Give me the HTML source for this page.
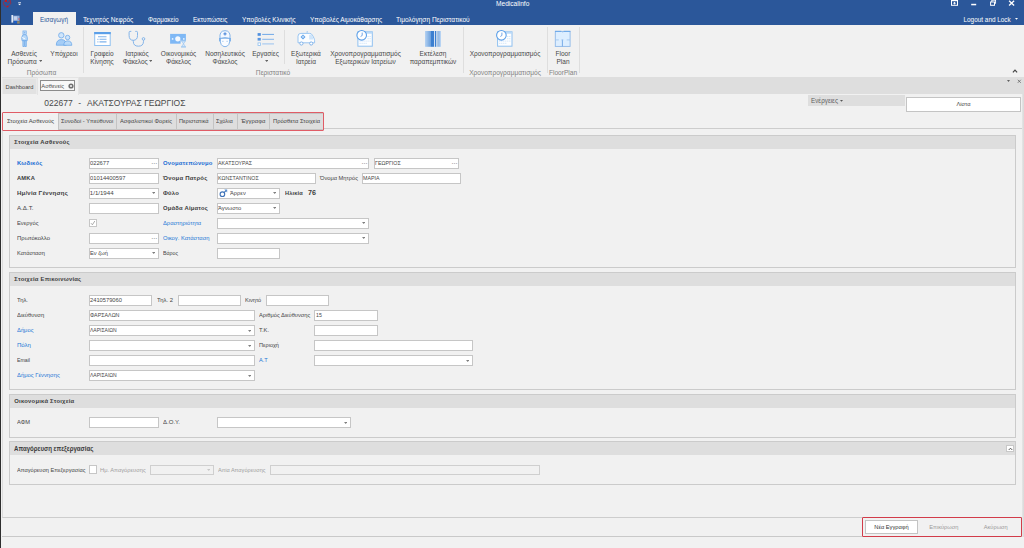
<!DOCTYPE html>
<html><head><meta charset="utf-8"><title>Medicalinfo</title>
<style>
*{box-sizing:border-box;margin:0;padding:0}
html,body{width:1024px;height:548px;overflow:hidden;background:#f1f1f1;font-family:"Liberation Sans",sans-serif;font-size:6px;color:#444}
.a{position:absolute;white-space:nowrap}
#title{left:0;top:0;width:1024px;height:25px;background:#2b579a;border-bottom:0}
#edge{left:0;top:0;width:1px;height:548px;background:#2e2e2e}
.rt{position:absolute;top:14.5px;color:#fff;font-size:6.4px;white-space:nowrap;line-height:10px}
.rl{position:absolute;font-size:6.5px;color:#484848;text-align:center;line-height:7.9px;white-space:nowrap;transform:translateX(-50%)}
.gl{position:absolute;font-size:6.6px;color:#828282;top:68.8px;line-height:8px;white-space:nowrap;transform:translateX(-50%)}
.sep{position:absolute;width:1px;background:#dedede}
.in{position:absolute;background:#fff;border:1px solid #c6c6c6;height:11px;font-size:6.1px;line-height:8.6px;color:#464646;padding-left:0.5px;white-space:nowrap;overflow:hidden}
.in.dis{background:#f1f1f1;border-color:#cfcfcf}
.lb{position:absolute;font-size:6.1px;line-height:10px;color:#444;white-space:nowrap}
.lb.b{font-weight:bold;color:#3c3c3c;font-size:6px;letter-spacing:0.2px}
.lb.l{color:#1f78d6}
.lb.bl{font-weight:bold;color:#1a6cd4;font-size:6px;letter-spacing:0.2px}
.lb.g{color:#9e9e9e}
.grp{position:absolute;left:9px;width:1007px;border:1px solid #cbcbcb;background:#f1f1f1}
.grp .h{position:absolute;left:0;top:0;right:0;height:12.8px;background:#dedede;font-weight:bold;font-size:5.9px;letter-spacing:0.22px;line-height:12.8px;padding-left:4.3px;color:#3c3c3c}
.dd{position:absolute;width:0;height:0;border-left:1.8px solid transparent;border-right:1.8px solid transparent;border-top:2.1px solid #707070}
.el{position:absolute;font-size:5.5px;font-weight:bold;color:#8c8c8c;letter-spacing:0.5px;line-height:9px}
.tab{position:absolute;top:113.5px;height:15.5px;background:#dedede;border:1px solid #c4c4c4;font-size:5.7px;line-height:13.5px;color:#444;text-align:center;white-space:nowrap}
</style></head><body>
<div class="a" id="title"></div>
<div class="a" style="left:496px;top:-1px;color:#fff;font-size:6.6px;line-height:9px">Medicalinfo</div>
<svg class="a" style="left:2px;top:0" width="12" height="9" viewBox="0 0 12 9"><path d="M1.400 2.500 L3.200 0.300 L5.600 2.600 L8.300 0.200 L8.800 3.300 L5.500 7.400 L2 5.200 Z" fill="none" stroke="#c0202a" stroke-width=".7"/><rect x="3.200" y="0" width="1.700" height="2" fill="#d01818"/><circle cx="5.600" cy="6.300" r=".7" fill="#d01818"/></svg>
<svg class="a" style="left:18px;top:2px" width="4" height="4" viewBox="0 0 4 4"><path d="M0.2 0.5h2.800" stroke="#cfd8ea" stroke-width=".8"/><path d="M0 1.700h3.200l-1.600 1.600z" fill="#fff"/></svg>
<svg class="a" style="left:951px;top:0px" width="8" height="6" viewBox="0 0 8 6"><rect x=".5" y=".3" width="6" height="5" fill="none" stroke="#fff" stroke-width="1"/><rect x=".5" y="0" width="6" height="1.2" fill="#fff"/><path d="M3.5 2v2.4M2.2 3.2h2.6" stroke="#fff" stroke-width=".9"/></svg>
<svg class="a" style="left:970px;top:3px" width="8" height="4" viewBox="0 0 8 4"><rect x="1.200" y="0.800" width="5" height="1.500" fill="#fff"/></svg>
<svg class="a" style="left:989.5px;top:0" width="8" height="6" viewBox="0 0 8 6"><rect x="1.8" y=".2" width="3.8" height="3" fill="none" stroke="#fff" stroke-width=".9"/><rect x=".6" y="2" width="3.9" height="3.3" fill="#2b579a" stroke="#fff" stroke-width="1"/></svg>
<svg class="a" style="left:1008px;top:0.2px" width="8" height="6" viewBox="0 0 8 6"><path d="M1.1 0.8l5 4.6M6.1 0.8L1.1 5.4" stroke="#fff" stroke-width="1.3"/></svg>
<div class="a" style="left:963.5px;top:14.5px;color:#fff;font-size:6.4px;line-height:10px">Logout and Lock</div>
<svg class="a" style="left:1015.30px;top:18.40px" width="3" height="1.8" viewBox="0 0 3 1.8"><path d="M0 0h3l-1.5 1.8z" fill="#fff"/></svg>
<div class="a" style="left:33px;top:12px;width:43px;height:13px;background:#f1f1f1"></div>
<svg class="a" style="left:11px;top:15px" width="10" height="9" viewBox="0 0 10 9"><rect x="0.4" y="0" width="1.8" height="7.6" fill="#e2e9f6"/><rect x="2.2" y="0.7" width="6.3" height="5.2" fill="#93add9"/><rect x="2.8" y="1.4" width="3.2" height="3.4" fill="#c5d3ec"/><rect x="7.4" y="3.3" width="1.3" height="1.4" fill="#e05a5a"/><rect x="3.2" y="6.2" width="2.7" height="1.9" fill="#1a5fd0"/><rect x="6.100" y="6.2" width="2.600" height="2.400" fill="#8f8468"/></svg>
<div class="rt" style="left:40px;color:#2b579a;transform:scaleX(0.989);transform-origin:0 50%">Εισαγωγή</div>
<div class="rt" style="left:83px;color:#fff;transform:scaleX(1.025);transform-origin:0 50%">Τεχνητός Νεφρός</div>
<div class="rt" style="left:147.5px;color:#fff;transform:scaleX(0.988);transform-origin:0 50%">Φαρμακείο</div>
<div class="rt" style="left:193px;color:#fff;transform:scaleX(1.011);transform-origin:0 50%">Εκτυπώσεις</div>
<div class="rt" style="left:241.8px;color:#fff;transform:scaleX(1.004);transform-origin:0 50%">Υποβολές Κλινικής</div>
<div class="rt" style="left:309.5px;color:#fff;transform:scaleX(1.016);transform-origin:0 50%">Υποβολές Αιμοκάθαρσης</div>
<div class="rt" style="left:396.2px;color:#fff;transform:scaleX(1.029);transform-origin:0 50%">Τιμολόγηση Περιστατικού</div>
<div class="sep" style="left:83px;top:27px;height:46px"></div>
<div class="sep" style="left:284px;top:30px;height:34px"></div>
<div class="sep" style="left:463px;top:27px;height:46px"></div>
<div class="sep" style="left:546.5px;top:27px;height:46px"></div>
<div class="sep" style="left:578.5px;top:27px;height:46px"></div>
<div class="rl" style="left:24px;top:50.2px">Ασθενείς<br>Πρόσωπα&nbsp;&nbsp;</div>
<div class="rl" style="left:64px;top:50.2px">Υπόχρεοι</div>
<div class="rl" style="left:102px;top:50.2px">Γραφείο<br>Κίνησης</div>
<div class="rl" style="left:137px;top:50.2px">Ιατρικός<br>Φάκελος&nbsp;&nbsp;</div>
<div class="rl" style="left:178.5px;top:50.2px">Οικονομικός<br>Φάκελος</div>
<div class="rl" style="left:225px;top:50.2px">Νοσηλευτικός<br>Φάκελος</div>
<div class="rl" style="left:265.5px;top:50.2px">Εργασίες</div>
<div class="rl" style="left:306px;top:50.2px">Εξωτερικά<br>Ιατρεία</div>
<div class="rl" style="left:365.5px;top:50.2px">Χρονοπρογραμματισμός<br>Εξωτερικών Ιατρείων</div>
<div class="rl" style="left:433px;top:50.2px">Εκτέλεση<br>παραπεμπτικών</div>
<div class="rl" style="left:505px;top:50.2px">Χρονοπρογραμματισμός</div>
<div class="rl" style="left:563px;top:50.2px">Floor<br>Plan</div>
<svg class="a" style="left:38.70px;top:60.25px" width="3.4" height="1.9" viewBox="0 0 3.4 1.9"><path d="M0 0h3.4l-1.7 1.9z" fill="#666"/></svg>
<svg class="a" style="left:148.70px;top:60.25px" width="3.4" height="1.9" viewBox="0 0 3.4 1.9"><path d="M0 0h3.4l-1.7 1.9z" fill="#666"/></svg>
<svg class="a" style="left:264.50px;top:60.30px" width="3.4" height="2" viewBox="0 0 3.4 2"><path d="M0 0h3.4l-1.7 2z" fill="#666"/></svg>
<div class="gl" style="left:41.5px">Πρόσωπα</div>
<div class="gl" style="left:273px">Περιστατικό</div>
<div class="gl" style="left:505px">Χρονοπρογραμματισμός</div>
<div class="gl" style="left:563px">FloorPlan</div>
<svg class="a" style="left:1011.5px;top:69px" width="6" height="4" viewBox="0 0 6 4"><path d="M0.9 3.3L3 1.2l2.1 2.1" stroke="#444" stroke-width="1.2" fill="none"/></svg>
<svg class="a" style="left:0;top:0" width="600" height="52" viewBox="0 0 600 52">
<!-- 1 patient -->
<g fill="#b9d9f8" stroke="#6eaaea" stroke-width=".8">
<rect x="23" y="31" width="3.2" height="3.2" fill="#eaf4ff"/>
<path d="M22.6 35.2q2-1 4 0q1.2 2.5 0.6 5.5h-5.2q-.8-3 .6-5.500z"/>
<path d="M22.9 40.700h1.400v5.800h-1.400zM24.900 40.700h1.400v5.800h-1.400z"/>
</g>
<path d="M24.600 31.600v2M23.600 32.600h2" stroke="#6eaaea" stroke-width=".6"/>
<path d="M22.300 37.500l2.600 1.300" stroke="#fff" stroke-width="1"/>
<!-- 2 people -->
<g fill="#a5cdf6" stroke="#6eaaea" stroke-width=".8">
<circle cx="61.300" cy="35.300" r="2.700" fill="#cfe5fb"/>
<path d="M56.300 45.200q0-5.600 5-5.600t5 5.600z"/>
<circle cx="67.600" cy="37.500" r="2.200" fill="#cfe5fb"/>
<path d="M63.800 45.300q0-4.400 4-4.400t4 4.400z" fill="#b9d9f8"/>
</g>
<!-- 3 form -->
<rect x="94.700" y="32.500" width="15.500" height="13" fill="#fff" stroke="#8fc0f0" stroke-width="1"/>
<rect x="94.200" y="32" width="16.500" height="2.200" fill="#5b9fe8"/>
<path d="M98 36.700h8.500M99.500 39.300h7M99.500 41.900h7" stroke="#7fb2ea" stroke-width="1.100"/>
<path d="M97.300 39.300h1.200M97.300 41.900h1.200" stroke="#7fb2ea" stroke-width="1"/>
<!-- 4 stethoscope -->
<g fill="none" stroke="#78aee8" stroke-width=".9">
<path d="M131.300 31.400h-1.300q-.9 0-.9 1v3.200q0 4.600 4.200 4.700q4.200-.1 4.200-4.700v-3.200q0-1-.9-1h-1.300"/>
<path d="M133.300 40.300v1q0 4.900 5.100 4.900t5.100-4.900v-1"/>
<circle cx="143.500" cy="38.900" r="1.300"/>
</g>
<!-- 5 money -->
<rect x="170.100" y="33.900" width="15.800" height="9.800" fill="#7fb8f5"/>
<circle cx="177.800" cy="38.800" r="2.600" fill="#f4f9ff"/>
<circle cx="172.600" cy="38.900" r=".9" fill="#e8f3ff"/>
<circle cx="183.800" cy="38.900" r=".9" fill="#e8f3ff"/>
<rect x="180.600" y="40.100" width="5.700" height="7.300" fill="#f1f1f1"/>
<path d="M181 40.600h5M181 47h5" stroke="#8fc0f0" stroke-width=".9"/>
<path d="M181.600 41l1.900 2.800l-1.900 2.800h3.800l-1.900-2.800l1.900-2.800z" fill="#d4e8fb" stroke="#8fc0f0" stroke-width=".6"/>
<!-- 6 nurse -->
<g fill="#fafcff" stroke="#78aee8" stroke-width=".9">
<path d="M220.200 38.200q-.4 8.300 4.800 8.500q5.200-.2 4.800-8.500z"/>
<path d="M220 38.400q-.9-7.700 5-7.700t5 7.700q-5-1.600-10 0z" fill="#f4f9ff"/>
</g>
<path d="M225 32.300v3.200M223.400 33.900h3.200" stroke="#3f7fd6" stroke-width="1"/>
<path d="M222.900 40.800v1.100M227.100 40.800v1.100" stroke="#78aee8" stroke-width=".8"/>
<path d="M219.800 38v3.400M230.200 38v3.400" stroke="#5b9fe8" stroke-width="1"/>
<!-- 7 tasks -->
<rect x="257.600" y="33.100" width="3.200" height="2.700" fill="#4f8fdf"/>
<rect x="257.600" y="37.900" width="3.200" height="2.700" fill="#5b97e2"/>
<rect x="258" y="42.900" width="2.500" height="2.500" fill="#fff" stroke="#8fc0f0" stroke-width=".8"/>
<path d="M262.200 34.400h11.800" stroke="#6fa8e8" stroke-width="1"/>
<path d="M262.200 39.300h11.800" stroke="#85b6ec" stroke-width="1"/>
<path d="M262.200 43.900h11.800" stroke="#a8cbf0" stroke-width="1.200"/>
<!-- 8 ambulance -->
<path d="M298 42.800v-6.600q0-2.800 2.800-2.800h9q1.600 0 2.600 1.800l1.600 3q.6 1.200.6 2.400v2.200z" fill="#fbfdff" stroke="#8fc0f0" stroke-width=".9"/>
<path d="M309.200 34.800h2.300l2 3.800v1h-4.300z" fill="#cfe5fb"/>
<path d="M306 32.300l1.400-1.200l.7 1.400z" fill="#8fc0f0"/>
<path d="M303 34.400l2.500 2.500l-2.500 2.500l-2.500-2.500z" fill="#5b9fe8"/>
<path d="M303 35.700v2.400M301.800 36.900h2.400" stroke="#e8f3ff" stroke-width=".7"/>
<circle cx="301.400" cy="43.500" r="1.600" fill="#fff" stroke="#78aee8" stroke-width=".9"/>
<circle cx="311.200" cy="43.500" r="1.600" fill="#fff" stroke="#78aee8" stroke-width=".9"/>
<!-- 9 calendar+clock -->
<g>
<rect x="357.900" y="31.800" width="14.400" height="14.400" fill="#fdfeff" stroke="#8fc0f0" stroke-width="1"/>
<rect x="357.900" y="31.800" width="14.400" height="1.900" fill="#b9d9f8"/>
<g fill="#c4def8"><rect x="367.600" y="36" width="1" height="1"/><rect x="369.600" y="36" width="1" height="1"/><rect x="367.600" y="38.200" width="1" height="1"/><rect x="369.600" y="38.200" width="1" height="1"/>
<rect x="359.600" y="40.600" width="1" height="1"/><rect x="361.600" y="40.600" width="1" height="1"/><rect x="363.600" y="40.600" width="1" height="1"/><rect x="365.600" y="40.600" width="1" height="1"/><rect x="367.600" y="40.600" width="1" height="1"/><rect x="369.600" y="40.600" width="1" height="1"/>
<rect x="359.600" y="42.800" width="1" height="1"/><rect x="361.600" y="42.800" width="1" height="1"/><rect x="363.600" y="42.800" width="1" height="1"/><rect x="365.600" y="42.800" width="1" height="1"/></g>
<circle cx="361.700" cy="35.300" r="4.800" fill="#fff" stroke="#5b9fe8" stroke-width="1.100"/>
<path d="M362.200 32.600v2.900l-1.600 1" fill="none" stroke="#4f8fdf" stroke-width=".8"/>
</g>
<!-- 10 barcode -->
<defs><linearGradient id="bg1" x1="0" x2="1" y1="0" y2="0"><stop offset="0" stop-color="#b5d2f2"/><stop offset="1" stop-color="#6a9fdc"/></linearGradient>
<linearGradient id="bg2" x1="0" x2="1" y1="0" y2="0"><stop offset="0" stop-color="#8db8ea"/><stop offset="1" stop-color="#c5dcf5"/></linearGradient></defs>
<rect x="425" y="31" width="6" height="15.800" fill="url(#bg1)"/>
<rect x="431" y="31" width="3.300" height="15.800" fill="#3b7fd0"/>
<rect x="434.300" y="31" width=".7" height="15.800" fill="#dbe8f7"/>
<rect x="435" y="31" width="1.200" height="15.800" fill="#3b7fd0"/>
<rect x="436.700" y="31" width=".8" height="15.800" fill="#9cc0ea"/>
<rect x="437.700" y="31" width=".9" height="15.800" fill="#5f97d8"/>
<rect x="439" y="31" width="2" height="15.800" fill="url(#bg2)"/>
<!-- 11 calendar 2 -->
<g transform="translate(139.7,0)">
<rect x="357.900" y="31.800" width="14.400" height="14.400" fill="#fdfeff" stroke="#8fc0f0" stroke-width="1"/>
<rect x="357.900" y="31.800" width="14.400" height="1.900" fill="#b9d9f8"/>
<g fill="#c4def8"><rect x="367.600" y="36" width="1" height="1"/><rect x="369.600" y="36" width="1" height="1"/><rect x="367.600" y="38.200" width="1" height="1"/><rect x="369.600" y="38.200" width="1" height="1"/>
<rect x="359.600" y="40.600" width="1" height="1"/><rect x="361.600" y="40.600" width="1" height="1"/><rect x="363.600" y="40.600" width="1" height="1"/><rect x="365.600" y="40.600" width="1" height="1"/><rect x="367.600" y="40.600" width="1" height="1"/><rect x="369.600" y="40.600" width="1" height="1"/>
<rect x="359.600" y="42.800" width="1" height="1"/><rect x="361.600" y="42.800" width="1" height="1"/><rect x="363.600" y="42.800" width="1" height="1"/><rect x="365.600" y="42.800" width="1" height="1"/></g>
<circle cx="361.700" cy="35.300" r="4.800" fill="#fff" stroke="#5b9fe8" stroke-width="1.100"/>
<path d="M362.200 32.600v2.900l-1.600 1" fill="none" stroke="#4f8fdf" stroke-width=".8"/>
</g>
<!-- 12 floor plan -->
<rect x="555.300" y="31.400" width="14.800" height="15" fill="#ddeeff" stroke="#8fb8e8" stroke-width=".9"/>
<path d="M555 31.300h6.200M563.600 31.300h6.800" stroke="#5b9fe8" stroke-width=".8"/>
<path d="M561.400 31.300l1.800 1.200" stroke="#8fb8e8" stroke-width=".6"/>
<path d="M562.400 39.700v6.700" stroke="#6ea4e4" stroke-width=".9"/>
<path d="M555.500 39.900h3.300M566.700 39.900h3.300M561.400 39.900h2" stroke="#9cc3ee" stroke-width=".8"/>
</svg>

<div class="a" style="left:1.5px;top:76.8px;width:1022.5px;height:17px;background:#dedede"></div>
<div class="a" style="left:2px;top:78px;width:34.5px;height:15.5px;background:#e2e2e2;border:1px solid #e9e9e9;border-bottom:none;font-size:5.7px;line-height:16px;padding-left:2.6px;color:#444">Dashboard</div>
<div class="a" style="left:37px;top:77px;width:41.5px;height:17.5px;background:#f1f1f1;border:1px solid #e4e4e4;border-bottom:none"></div>
<div class="a" style="left:40px;top:80px;width:35px;height:11px;border:1px solid #8c8c8c;background:#f8f8f8;font-size:5.8px;line-height:11px;padding-left:0.3px;color:#505050">Ασθενείς</div>
<svg class="a" style="left:67.9px;top:83.4px" width="6" height="6" viewBox="0 0 6 6"><circle cx="3" cy="3" r="2.6" fill="#707070"/><path d="M2 2l2 2M4 2L2 4" stroke="#f1f1f1" stroke-width=".8"/></svg>
<svg class="a" style="left:1006.50px;top:80.30px" width="3" height="2" viewBox="0 0 3 2"><path d="M0 0h3l-1.5 2z" fill="#606060"/></svg>
<svg class="a" style="left:1016.5px;top:79px" width="5" height="5" viewBox="0 0 5 5"><path d="M0.8 0.8l3 3M3.8 0.8l-3 3" stroke="#666" stroke-width=".8"/></svg>
<div class="a" style="left:44.3px;top:97px;font-size:8.5px;line-height:12px;color:#4a4a4a">022677</div>
<div class="a" style="left:78.2px;top:97px;font-size:8.5px;line-height:12px;color:#4a4a4a">-</div>
<div class="a" style="left:87px;top:97px;font-size:8.5px;line-height:12px;color:#4a4a4a">ΑΚΑΤΣΟΥΡΑΣ ΓΕΩΡΓΙΟΣ</div>
<div class="a" style="left:808px;top:95px;width:96.5px;height:11.3px;background:#dedede;font-size:6.3px;line-height:12px;padding-left:3px;color:#606060">Ενέργειες</div>
<svg class="a" style="left:839.50px;top:100.40px" width="3" height="1.8" viewBox="0 0 3 1.8"><path d="M0 0h3l-1.5 1.8z" fill="#555"/></svg>
<div class="a" style="left:906px;top:97px;width:115px;height:15px;background:#fff;border:1px solid #c4c4c4;font-size:5.7px;line-height:13.5px;text-align:center;color:#444">Λίστα</div>
<div class="a" style="left:2px;top:128px;width:1022px;height:390px;border:1px solid #cdcdcd;border-left-color:#dcdcdc;border-right:none"></div>
<div class="tab" style="left:3px;width:55px;background:#f1f1f1;border-color:#f1f1f1;height:17px;top:113px"></div>
<div class="a" style="left:7.25px;top:116px;font-size:5.8px;line-height:10px;color:#444;transform:scaleX(1.005);transform-origin:0 50%">Στοιχεία Ασθενούς</div>
<div class="tab" style="left:58px;width:59px;height:17px;top:113px"></div>
<div class="a" style="left:60.9px;top:116px;font-size:5.8px;line-height:10px;color:#444;transform:scaleX(0.983);transform-origin:0 50%">Συνοδοί - Υπεύθυνοι</div>
<div class="tab" style="left:116px;width:60.5px;height:17px;top:113px"></div>
<div class="a" style="left:120px;top:116px;font-size:5.8px;line-height:10px;color:#444;transform:scaleX(0.987);transform-origin:0 50%">Ασφαλιστικοί Φορείς</div>
<div class="tab" style="left:175.5px;width:38.0px;height:17px;top:113px"></div>
<div class="a" style="left:178.75px;top:116px;font-size:5.8px;line-height:10px;color:#444;transform:scaleX(0.975);transform-origin:0 50%">Περιστατικά</div>
<div class="tab" style="left:212.5px;width:25.5px;height:17px;top:113px"></div>
<div class="a" style="left:216.25px;top:116px;font-size:5.8px;line-height:10px;color:#444;transform:scaleX(0.978);transform-origin:0 50%">Σχόλια</div>
<div class="tab" style="left:237px;width:32.75px;height:17px;top:113px"></div>
<div class="a" style="left:240.5px;top:116px;font-size:5.8px;line-height:10px;color:#444;transform:scaleX(1.016);transform-origin:0 50%">Έγγραφα</div>
<div class="tab" style="left:268.75px;width:54.75px;height:17px;top:113px"></div>
<div class="a" style="left:272.5px;top:116px;font-size:5.8px;line-height:10px;color:#444;transform:scaleX(0.988);transform-origin:0 50%">Πρόσθετα Στοιχεία</div>
<div class="a" style="left:2px;top:112px;width:322px;height:19px;border:1.2px solid #e05c66;border-radius:1px"></div>
<div class="grp" style="top:135px;height:133px"><div class="h">Στοιχεία Ασθενούς</div></div>
<div class="lb bl" style="left:16.5px;top:158px;transform:scaleX(0.984);transform-origin:0 50%">Κωδικός</div>
<div class="in " style="left:89px;top:158px;width:69.69999999999999px;height:10.8px"><span style="display:inline-block;margin-left:-0.7px;transform:scaleX(0.946);transform-origin:0 50%">022677</span></div>
<div class="el" style="left:151.39999999999998px;top:158.4px">...</div>
<div class="lb b" style="left:16.5px;top:173px;transform:scaleX(0.958);transform-origin:0 50%">ΑΜΚΑ</div>
<div class="in " style="left:89px;top:173px;width:69.69999999999999px;height:10.8px"><span style="display:inline-block;margin-left:-0.7px;transform:scaleX(0.951);transform-origin:0 50%">01014400597</span></div>
<div class="lb b" style="left:16.5px;top:188px;transform:scaleX(1.008);transform-origin:0 50%">Ημ/νία Γέννησης</div>
<div class="in " style="left:89px;top:188px;width:69.69999999999999px;height:10.8px"><span style="display:inline-block;margin-left:-0.7px;transform:scaleX(1.000);transform-origin:0 50%">1/1/1944</span></div>
<svg class="a" style="left:151.50px;top:192.30px" width="3.4" height="2.0" viewBox="0 0 3.4 2.0"><path d="M0 0h3.4l-1.7 2.0z" fill="#808080"/></svg>
<div class="lb " style="left:16.5px;top:203px;transform:scaleX(1.013);transform-origin:0 50%">Α.Δ.Τ.</div>
<div class="in " style="left:89px;top:203px;width:69.69999999999999px;height:10.8px"></div>
<div class="lb " style="left:16.5px;top:218px;transform:scaleX(0.948);transform-origin:0 50%">Ενεργός</div>
<div class="in" style="left:88.5px;top:218.5px;width:8.8px;height:8.8px"></div>
<svg class="a" style="left:90px;top:220px" width="6" height="6" viewBox="0 0 6 6"><path d="M1 3.2l1.4 1.6L4.8 1" stroke="#888" stroke-width=".7" fill="none"/></svg>
<div class="lb " style="left:16.5px;top:233px;transform:scaleX(0.970);transform-origin:0 50%">Πρωτόκολλο</div>
<div class="in " style="left:89px;top:233px;width:69.69999999999999px;height:10.8px"></div>
<div class="el" style="left:151.39999999999998px;top:233.4px">...</div>
<div class="lb " style="left:16.5px;top:248px;transform:scaleX(0.929);transform-origin:0 50%">Κατάσταση</div>
<div class="in " style="left:89px;top:248px;width:69.69999999999999px;height:10.8px"><span style="display:inline-block;margin-left:-0.7px;transform:scaleX(0.935);transform-origin:0 50%">Εν ζωή</span></div>
<svg class="a" style="left:151.50px;top:252.30px" width="3.4" height="2.0" viewBox="0 0 3.4 2.0"><path d="M0 0h3.4l-1.7 2.0z" fill="#808080"/></svg>
<div class="lb bl" style="left:163px;top:158px;transform:scaleX(0.974);transform-origin:0 50%">Ονοματεπώνυμο</div>
<div class="in " style="left:217px;top:158px;width:152px;height:10.8px"><span style="display:inline-block;margin-left:-0.7px;transform:scaleX(0.865);transform-origin:0 50%">ΑΚΑΤΣΟΥΡΑΣ</span></div>
<div class="el" style="left:361.7px;top:158.4px">...</div>
<div class="in " style="left:374.2px;top:158px;width:84.80000000000001px;height:10.8px"><span style="display:inline-block;margin-left:-0.7px;transform:scaleX(0.869);transform-origin:0 50%">ΓΕΩΡΓΙΟΣ</span></div>
<div class="el" style="left:451.7px;top:158.4px">...</div>
<div class="lb b" style="left:163px;top:173px;transform:scaleX(0.998);transform-origin:0 50%">Όνομα Πατρός</div>
<div class="in " style="left:217px;top:173px;width:98.69999999999999px;height:10.8px"><span style="display:inline-block;margin-left:-0.7px;transform:scaleX(0.869);transform-origin:0 50%">ΚΩΝΣΤΑΝΤΙΝΟΣ</span></div>
<div class="lb " style="left:320px;top:173px;transform:scaleX(0.936);transform-origin:0 50%">Όνομα Μητρός</div>
<div class="in " style="left:362px;top:173px;width:98.5px;height:10.8px"><span style="display:inline-block;margin-left:-0.7px;transform:scaleX(0.869);transform-origin:0 50%">ΜΑΡΙΑ</span></div>
<div class="lb b" style="left:163px;top:188px;transform:scaleX(0.991);transform-origin:0 50%">Φύλο</div>
<div class="in " style="left:217px;top:188px;width:63.19999999999999px;height:10.8px"><span style="display:inline-block;margin-left:11px;transform:scaleX(0.939);transform-origin:0 50%">Άρρεν</span></div>
<svg class="a" style="left:273.00px;top:192.30px" width="3.4" height="2.0" viewBox="0 0 3.4 2.0"><path d="M0 0h3.4l-1.7 2.0z" fill="#808080"/></svg>
<svg class="a" style="left:219px;top:189px" width="9" height="9" viewBox="0 0 9 9"><circle cx="3.4" cy="5.2" r="2.3" fill="none" stroke="#3f73b8" stroke-width="1.1"/><path d="M5 3.6L7.3 1.3" stroke="#3f73b8" stroke-width="1.1" fill="none"/><path d="M5.3 0.5h2.9v2.9z" fill="#5b8fd0"/></svg>
<div class="lb b" style="left:285px;top:188px;transform:scaleX(0.936);transform-origin:0 50%">Ηλικία</div>
<div class="lb b" style="left:308px;top:188px;font-size:7.2px;letter-spacing:0">76</div>
<div class="lb b" style="left:163px;top:203px;transform:scaleX(0.977);transform-origin:0 50%">Ομάδα Αίματος</div>
<div class="in " style="left:217px;top:203px;width:63.19999999999999px;height:10.8px"><span style="display:inline-block;margin-left:-0.7px;transform:scaleX(0.957);transform-origin:0 50%">Άγνωστο</span></div>
<svg class="a" style="left:273.00px;top:207.30px" width="3.4" height="2.0" viewBox="0 0 3.4 2.0"><path d="M0 0h3.4l-1.7 2.0z" fill="#808080"/></svg>
<div class="lb l" style="left:163px;top:218px;transform:scaleX(0.946);transform-origin:0 50%">Δραστηριότητα</div>
<div class="in " style="left:217px;top:218px;width:152px;height:10.8px"></div>
<svg class="a" style="left:361.80px;top:222.30px" width="3.4" height="2.0" viewBox="0 0 3.4 2.0"><path d="M0 0h3.4l-1.7 2.0z" fill="#808080"/></svg>
<div class="lb l" style="left:163px;top:233px;transform:scaleX(0.948);transform-origin:0 50%">Οικογ. Κατάσταση</div>
<div class="in " style="left:217px;top:233px;width:152px;height:10.8px"></div>
<svg class="a" style="left:361.80px;top:237.30px" width="3.4" height="2.0" viewBox="0 0 3.4 2.0"><path d="M0 0h3.4l-1.7 2.0z" fill="#808080"/></svg>
<div class="lb " style="left:163px;top:248px;transform:scaleX(0.862);transform-origin:0 50%">Βάρος</div>
<div class="in " style="left:217px;top:248px;width:63.19999999999999px;height:10.8px"></div>
<div class="grp" style="top:272px;height:118px"><div class="h">Στοιχεία Επικοινωνίας</div></div>
<div class="lb " style="left:16.5px;top:295px;transform:scaleX(0.963);transform-origin:0 50%">Τηλ.</div>
<div class="in " style="left:89px;top:295.2px;width:63.19999999999999px;height:10.8px"><span style="display:inline-block;margin-left:-0.7px;transform:scaleX(0.943);transform-origin:0 50%">2410579060</span></div>
<div class="lb " style="left:156.5px;top:295px;transform:scaleX(0.969);transform-origin:0 50%">Τηλ. 2</div>
<div class="in " style="left:177.5px;top:295.2px;width:63.19999999999999px;height:10.8px"></div>
<div class="lb " style="left:245px;top:295px;transform:scaleX(0.920);transform-origin:0 50%">Κινητό</div>
<div class="in " style="left:266.2px;top:295.2px;width:63.19999999999999px;height:10.8px"></div>
<div class="lb " style="left:16.5px;top:310px;transform:scaleX(0.959);transform-origin:0 50%">Διεύθυνση</div>
<div class="in " style="left:89px;top:310.2px;width:165.7px;height:10.8px"><span style="display:inline-block;margin-left:-0.7px;transform:scaleX(0.875);transform-origin:0 50%">ΦΑΡΣΑΛΩΝ</span></div>
<div class="lb " style="left:258.7px;top:310px;transform:scaleX(0.934);transform-origin:0 50%">Αριθμός Διεύθυνσης</div>
<div class="in " style="left:314.2px;top:310.2px;width:63.400000000000034px;height:10.8px"><span style="display:inline-block;margin-left:0.3px;transform:scaleX(0.855);transform-origin:0 50%">15</span></div>
<div class="lb l" style="left:16.5px;top:325px;transform:scaleX(0.953);transform-origin:0 50%">Δήμος</div>
<div class="in " style="left:89px;top:325.2px;width:165.7px;height:10.8px"><span style="display:inline-block;margin-left:-0.7px;transform:scaleX(0.825);transform-origin:0 50%">ΛΑΡΙΣΑΙΩΝ</span></div>
<svg class="a" style="left:247.50px;top:329.50px" width="3.4" height="2.0" viewBox="0 0 3.4 2.0"><path d="M0 0h3.4l-1.7 2.0z" fill="#808080"/></svg>
<div class="lb " style="left:258.7px;top:325px;transform:scaleX(0.951);transform-origin:0 50%">Τ.Κ.</div>
<div class="in " style="left:314.2px;top:325.2px;width:63.400000000000034px;height:10.8px"></div>
<div class="lb l" style="left:16.5px;top:340px;transform:scaleX(0.991);transform-origin:0 50%">Πόλη</div>
<div class="in " style="left:89px;top:340.2px;width:165.7px;height:10.8px"></div>
<svg class="a" style="left:247.50px;top:344.50px" width="3.4" height="2.0" viewBox="0 0 3.4 2.0"><path d="M0 0h3.4l-1.7 2.0z" fill="#808080"/></svg>
<div class="lb " style="left:258.7px;top:340px;transform:scaleX(0.919);transform-origin:0 50%">Περιοχή</div>
<div class="in " style="left:314.2px;top:340.2px;width:158.5px;height:10.8px"></div>
<div class="lb " style="left:16.5px;top:355px;transform:scaleX(0.852);transform-origin:0 50%">Email</div>
<div class="in " style="left:89px;top:355.2px;width:165.7px;height:10.8px"></div>
<div class="lb l" style="left:258.7px;top:355px;transform:scaleX(0.922);transform-origin:0 50%">Α.Τ</div>
<div class="in " style="left:314.2px;top:355.2px;width:158.5px;height:10.8px"></div>
<svg class="a" style="left:465.50px;top:359.50px" width="3.4" height="2.0" viewBox="0 0 3.4 2.0"><path d="M0 0h3.4l-1.7 2.0z" fill="#808080"/></svg>
<div class="lb l" style="left:16.5px;top:370px;transform:scaleX(0.957);transform-origin:0 50%">Δήμος Γέννησης</div>
<div class="in " style="left:89px;top:370.2px;width:165.7px;height:10.8px"><span style="display:inline-block;margin-left:-0.7px;transform:scaleX(0.825);transform-origin:0 50%">ΛΑΡΙΣΑΙΩΝ</span></div>
<svg class="a" style="left:247.50px;top:374.50px" width="3.4" height="2.0" viewBox="0 0 3.4 2.0"><path d="M0 0h3.4l-1.7 2.0z" fill="#808080"/></svg>
<div class="grp" style="top:394px;height:44px"><div class="h">Οικονομικά Στοιχεία</div></div>
<div class="lb " style="left:16.5px;top:417px;transform:scaleX(0.939);transform-origin:0 50%">ΑΦΜ</div>
<div class="in " style="left:89px;top:417.3px;width:69.69999999999999px;height:10.8px"></div>
<div class="lb " style="left:163px;top:417px;transform:scaleX(0.989);transform-origin:0 50%">Δ.Ο.Υ.</div>
<div class="in " style="left:217px;top:417.3px;width:133.7px;height:10.8px"></div>
<svg class="a" style="left:343.50px;top:421.60px" width="3.4" height="2.0" viewBox="0 0 3.4 2.0"><path d="M0 0h3.4l-1.7 2.0z" fill="#808080"/></svg>
<div class="grp" style="top:441px;height:44px"><div class="h"><span style="display:inline-block;line-height:14px;font-size:6.5px;letter-spacing:0;transform:scaleX(0.938);transform-origin:0 50%">Απαγόρευση επεξεργασίας</span></div></div>
<div class="a" style="left:1006.2px;top:444.7px;width:8.2px;height:7.8px;background:#fff;border:1px solid #c8c8c8"></div>
<svg class="a" style="left:1008px;top:446.5px" width="5" height="4" viewBox="0 0 5 4"><path d="M0.7 3L2.5 1.2 4.3 3" stroke="#444" stroke-width=".9" fill="none"/></svg>
<div class="lb " style="left:16.5px;top:465px;transform:scaleX(0.918);transform-origin:0 50%">Απαγόρευση Επεξεργασίας</div>
<div class="in" style="left:88.5px;top:465px;width:8.8px;height:8.8px"></div>
<div class="lb g" style="left:100px;top:465px;transform:scaleX(0.938);transform-origin:0 50%">Ημ. Απαγόρευσης</div>
<div class="in dis" style="left:150px;top:464.8px;width:63.80000000000001px;height:10px"></div>
<svg class="a" style="left:206.60px;top:469.10px" width="3.4" height="2.0" viewBox="0 0 3.4 2.0"><path d="M0 0h3.4l-1.7 2.0z" fill="#c8c8c8"/></svg>
<div class="lb g" style="left:217.5px;top:465px;transform:scaleX(0.916);transform-origin:0 50%">Αιτία Απαγόρευσης</div>
<div class="in dis" style="left:270px;top:464.8px;width:269.5px;height:10px"></div>
<div class="a" style="left:1.5px;top:536px;width:1022.5px;height:1px;background:#c9c9c9"></div>
<div class="a" style="left:865px;top:520px;width:53px;height:14px;background:#fff;border:1px solid #c4c4c4;font-size:5.7px;line-height:12.2px;text-align:center;color:#333">Νέα Εγγραφή</div>
<div class="a" style="left:929.2px;top:521.5px;font-size:5.7px;line-height:10px;color:#9a9a9a">Επικύρωση</div>
<div class="a" style="left:983.7px;top:521.5px;font-size:5.7px;line-height:10px;color:#9a9a9a">Ακύρωση</div>
<div class="a" style="left:862px;top:517px;width:160px;height:20.2px;border:1.2px solid #d23c4a;border-radius:1px"></div>
<div class="a" style="left:1022px;top:94px;width:2px;height:443px;background:linear-gradient(90deg,#e6e6e6,#d8d8d8)"></div>
<div class="a" id="edge"></div>
</body></html>
